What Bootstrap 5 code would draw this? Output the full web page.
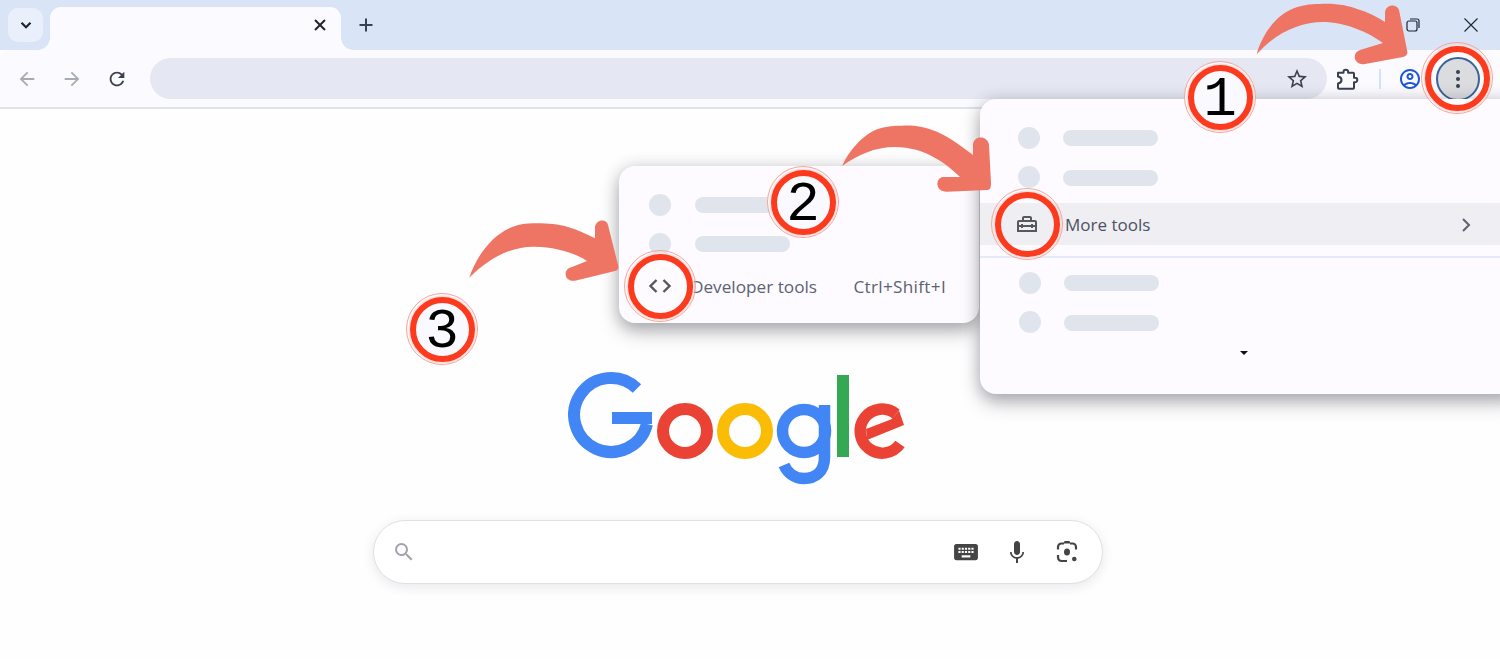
<!DOCTYPE html>
<html lang="en">
<head>
  <meta charset="UTF-8">
  <meta name="viewport" content="width=device-width, initial-scale=1">
  <title>New Tab</title>
  <link href="https://cdn.jsdelivr.net/npm/bootstrap@5.3.0/dist/css/bootstrap.min.css" rel="stylesheet">
  <style>
    html, body { height: 100%; }
    body {
      background-color: #fffeff;
      font-family: "Open Sans", "Noto Sans", sans-serif;
      overflow: hidden;
      position: relative;
    }
    .tab-strip {
      height: 50px;
      background-color: #d9e4f6;
      padding-left: 8px;
    }
    .tab-search {
      width: 35px;
      height: 34px;
      margin-top: 8px;
      background-color: #e9effb;
      border-radius: 10px;
    }
    .active-tab {
      width: 291px;
      height: 43px;
      margin-top: 7px;
      margin-left: 7px;
      padding: 0 14px 7px 0;
      background-color: #fbfaff;
      border-radius: 11px 11px 0 0;
      position: relative;
    }
    .active-tab::before, .active-tab::after {
      content: "";
      position: absolute;
      bottom: 0;
      width: 12px;
      height: 12px;
    }
    .active-tab::before { left: -12px; background: radial-gradient(circle at 0 0, transparent 11.5px, #fbfaff 12px); }
    .active-tab::after { right: -12px; background: radial-gradient(circle at 100% 0, transparent 11.5px, #fbfaff 12px); }
    .new-tab { width: 34px; height: 34px; margin: 8px 0 0 8px; }
    .win-btn { width: 58px; height: 50px; }
    .tool-bar {
      height: 59px;
      background-color: #fbfaff;
      border-bottom: 2px solid #dfe2e9;
      border-radius: 11px 11px 0 0;
      padding: 0 20px 0 7px;
      position: relative;
    }
    .tool-btn { width: 40px; height: 40px; flex: none; }
    .tool-btn + .tool-btn { margin-left: 5px; }
    .omni-box {
      height: 41px;
      margin-left: 13px;
      padding-right: 10px;
      background-color: #e5e8f2;
      border-radius: 21px;
    }
    .tool-sep { width: 2px; height: 20px; margin: 0 9px 0 12px; background-color: #d3e3fd; }
    .menu-btn { width: 44px; height: 44px; margin-left: 6px; flex: none; background-color: #dadce0; border: 2px solid #3a6398; border-radius: 50%; }

    .page-main { padding-right: 25px; padding-top: 262px; }
    .logo-svg { display: block; margin-bottom: 35px; }
    .search-pill {
      width: 730px;
      height: 64px;
      padding: 0 23px 0 18px;
      background-color: #fff;
      border: 1px solid #dfe1e5;
      border-radius: 32px;
      box-shadow: 0 3px 12px rgba(32, 33, 36, .1);
    }
    .search-tool { width: 24px; height: 24px; margin-left: 26px; }
    .key-tool { width: 26px; height: 26px; }

    .float-menu {
      position: absolute;
      background-color: #fdfbff;
      box-shadow: 0 9px 18px rgba(40, 45, 50, .34), 0 0 16px rgba(40, 45, 50, .16);
    }
    .menu-main { left: 980px; top: 99px; width: 540px; height: 295px; border-radius: 16px; z-index: 2; }
    .menu-tools { left: 619px; top: 166px; width: 360px; height: 157px; border-radius: 16px; z-index: 1; }
    .skel-dot, .skel-bar { position: absolute; background-color: #e0e4ec; }
    .skel-dot { width: 22px; height: 22px; border-radius: 50%; }
    .skel-bar { height: 16px; border-radius: 8px; }
    .d1 { left: 38px; top: 28px; } .b1 { left: 83px; top: 31px; width: 95px; }
    .d2 { left: 38px; top: 67px; } .b2 { left: 83px; top: 71px; width: 95px; }
    .d3 { left: 39px; top: 173px; } .b3 { left: 84px; top: 176px; width: 95px; }
    .d4 { left: 39px; top: 212px; } .b4 { left: 84px; top: 216px; width: 95px; }
    .d5 { left: 30px; top: 28px; } .b5 { left: 76px; top: 31px; width: 95px; }
    .d6 { left: 30px; top: 67px; } .b6 { left: 76px; top: 70px; width: 95px; }
    .tools-row {
      position: absolute;
      left: 0;
      right: 0;
      top: 104px;
      height: 42px;
      padding: 1px 26px 0 85px;
      background-color: #efeef2;
      color: #4b5263;
      font-size: 17px;
    }
    .row-chev { margin-left: 310px; }
    .menu-line { position: absolute; left: 0; right: 0; top: 157px; height: 2px; background-color: #e4eafa; }
    .menu-caret {
      position: absolute;
      left: 260px;
      top: 252px;
      border-left: 4px solid transparent;
      border-right: 4px solid transparent;
      border-top: 4px solid #111;
    }
    .dev-row {
      position: absolute;
      left: 72px;
      right: 33px;
      top: 108px;
      color: #5b6270;
      font-size: 17.2px;
    }
    .dev-keys { letter-spacing: .3px; }
    .dev-icon { position: absolute; left: 28px; top: 107px; }

    .step-arrow { position: absolute; z-index: 3; fill: #ee7464; }
    .arrow-1 { left: 1250px; top: 0; }
    .arrow-2 { left: 835px; top: 120px; }
    .arrow-3 { left: 460px; top: 215px; }
    .ring {
      position: absolute;
      z-index: 4;
      width: 72px;
      height: 72px;
      border-radius: 50%;
      border: 1.5px solid #f6a598;
      padding: 2px;
    }
    .ring::before {
      content: "";
      position: absolute;
      inset: 2.5px;
      border-radius: 50%;
      border: 6px solid #fb3a1e;
      box-shadow: 0 0 0 1.5px #fde0dc;
    }
    .ring-num {
      background-color: #f9f9ff;
      font-family: "Liberation Mono", monospace;
      font-size: 56px;
      line-height: 1;
      color: #000;
    }
    .ring-1 { left: 1184px; top: 61px; }
    .ring-2 { left: 767px; top: 166px; }
    .ring-3 { left: 406px; top: 293px; }
    .ring-menu { left: 1421px; top: 42px; }
    .ring-tools { left: 991px; top: 188px; }
    .ring-dev { left: 624px; top: 250px; }
    .ring-num span { position: relative; top: 3px; }
  </style>
</head>
<body>

  <!-- Tabs -->
  <div class="tab-strip d-flex align-items-start">
    <div class="tab-search d-flex align-items-center justify-content-center">
      <svg width="14" height="14" viewBox="0 0 14 14" fill="none" stroke="#1f2430" stroke-width="2.2"><path d="M2.5 4.8 7 9.2l4.5-4.4"/></svg>
    </div>
    <div class="active-tab d-flex align-items-center justify-content-end">
      <svg width="14" height="14" viewBox="0 0 14 14" fill="none" stroke="#1f2430" stroke-width="2"><path d="M2 2l10 10M12 2 2 12"/></svg>
    </div>
    <div class="new-tab d-flex align-items-center justify-content-center ms-2">
      <svg width="14" height="14" viewBox="0 0 14 14" fill="none" stroke="#3a4152" stroke-width="2"><path d="M7 .5v13M.5 7h13"/></svg>
    </div>
    <div class="win-btn d-flex align-items-center justify-content-center ms-auto">
      <svg width="14" height="14" viewBox="0 0 14 14" fill="none" stroke="#1f2430" stroke-width="1.2"><rect x="1" y="3" width="10" height="10" rx="2"/><path d="M4 1h7a2 2 0 0 1 2 2v7"/></svg>
    </div>
    <div class="win-btn d-flex align-items-center justify-content-center">
      <svg width="14" height="14" viewBox="0 0 14 14" fill="none" stroke="#1f2430" stroke-width="1.1"><path d="M.5.5l13 13M13.5.5l-13 13"/></svg>
    </div>
  </div>

  <!-- Toolbar -->
  <div class="tool-bar d-flex align-items-center">
    <div class="tool-btn d-flex align-items-center justify-content-center">
      <svg width="22" height="22" viewBox="0 0 24 24" fill="#a9abb2"><path d="M20 11H7.83l5.59-5.59L12 4l-8 8 8 8 1.41-1.41L7.83 13H20v-2z"/></svg>
    </div>
    <div class="tool-btn d-flex align-items-center justify-content-center">
      <svg width="22" height="22" viewBox="0 0 24 24" fill="#a9abb2"><path d="M12 4l-1.41 1.41L16.17 11H4v2h12.17l-5.58 5.59L12 20l8-8z"/></svg>
    </div>
    <div class="tool-btn d-flex align-items-center justify-content-center">
      <svg width="22" height="22" viewBox="0 0 24 24" fill="#39404f"><path d="M17.65 6.35A7.958 7.958 0 0 0 12 4c-4.42 0-7.99 3.58-7.99 8s3.57 8 7.99 8c3.73 0 6.84-2.55 7.73-6h-2.08A5.99 5.99 0 0 1 12 18c-3.31 0-6-2.69-6-6s2.69-6 6-6c1.66 0 3.14.69 4.22 1.78L13 11h7V4l-2.35 2.35z"/></svg>
    </div>
    <div class="omni-box flex-grow-1 d-flex align-items-center justify-content-end">
      <div class="tool-btn d-flex align-items-center justify-content-center">
        <svg width="24" height="24" viewBox="0 0 24 24" fill="#39404f"><path d="M22 9.24l-7.19-.62L12 2 9.19 8.63 2 9.24l5.46 4.73L5.82 21 12 17.27 18.18 21l-1.63-7.03L22 9.24zM12 15.4l-3.76 2.27 1-4.28-3.32-2.88 4.38-.38L12 6.1l1.71 4.04 4.38.38-3.32 2.88 1 4.28L12 15.4z"/></svg>
      </div>
    </div>
    <div class="tool-btn d-flex align-items-center justify-content-center">
      <svg width="24" height="24" viewBox="0 0 24 24" fill="none" stroke="#39404f" stroke-width="2" stroke-linejoin="round"><path d="M3 5.700H8.500V5a2.300 2.300 0 0 1 4.600 0V5.700H18a1 1 0 0 1 1 1V10.700h1a2.300 2.300 0 0 1 0 4.600H19V20.700a1 1 0 0 1-1 1H4a1 1 0 0 1-1-1V16.500c2.500-.5 3.500-2 3.500-3.500S5.500 10 3 9.500z"/></svg>
    </div>
    <div class="tool-sep"></div>
    <div class="tool-btn d-flex align-items-center justify-content-center">
      <svg width="24" height="24" viewBox="0 0 24 24" fill="#1a56d6"><path d="M12 2C6.48 2 2 6.48 2 12s4.48 10 10 10 10-4.48 10-10S17.52 2 12 2zM7.35 18.5C8.66 17.56 10.26 17 12 17s3.34.56 4.65 1.5C15.34 19.44 13.74 20 12 20s-3.34-.56-4.65-1.5zm10.79-1.38C16.45 15.8 14.32 15 12 15s-4.45.8-6.14 2.12C4.7 15.73 4 13.95 4 12c0-4.42 3.58-8 8-8s8 3.58 8 8c0 1.95-.7 3.73-1.86 5.12zM12 6c-1.93 0-3.5 1.57-3.5 3.5S10.07 13 12 13s3.5-1.57 3.5-3.5S13.93 6 12 6zm0 5c-.83 0-1.5-.67-1.5-1.5S11.17 8 12 8s1.5.67 1.5 1.5S12.83 11 12 11z"/></svg>
    </div>
    <div class="menu-btn d-flex align-items-center justify-content-center">
      <svg width="6" height="20" viewBox="0 0 6 20" fill="#39404f"><circle cx="3" cy="3" r="2"/><circle cx="3" cy="10" r="2"/><circle cx="3" cy="17" r="2"/></svg>
    </div>
  </div>

  <!-- New tab page -->
  <main class="page-main d-flex flex-column align-items-center">
    <svg class="logo-svg" width="340" height="114" viewBox="568 371 340 114" fill="none" role="img" aria-label="Google">
      <path d="M637 388.5A37 37 0 1 0 647 424" stroke="#4285f4" stroke-width="12"/>
      <rect x="612" y="412" width="40" height="12" fill="#4285f4"/>
      <circle cx="685" cy="431" r="22" stroke="#ea4335" stroke-width="12"/>
      <circle cx="745" cy="431" r="22" stroke="#fbbc05" stroke-width="12"/>
      <circle cx="804" cy="431" r="21.5" stroke="#4285f4" stroke-width="11.5"/>
      <path d="M824.5 405V457C824.5 472 815 478.5 804 478.5C794 478.5 787 472 784 465" stroke="#4285f4" stroke-width="11.5"/>
      <rect x="837" y="375" width="12" height="82" fill="#34a853"/>
      <path d="M900 444A22 22 0 1 1 896 414" stroke="#ea4335" stroke-width="11.5"/>
      <polygon points="899,410.5 904,425 867,440 866,429 891.4,419.2" fill="#ea4335"/>
    </svg>
    <div class="search-pill d-flex align-items-center">
      <svg class="me-auto" width="24" height="24" viewBox="0 0 24 24" fill="#a0a3a9"><path d="M15.5 14h-.79l-.28-.27A6.471 6.471 0 0 0 16 9.5 6.5 6.5 0 1 0 9.5 16c1.61 0 3.09-.59 4.23-1.57l.27.28v.79l5 4.99L20.49 19l-4.99-5zm-6 0C7.01 14 5 11.99 5 9.5S7.01 5 9.5 5 14 7.01 14 9.5 11.99 14 9.5 14z"/></svg>
      <svg class="search-tool key-tool" viewBox="0 0 24 24" fill="#444"><path d="M21 4.500H3C1.900 4.500 1 5.400 1 6.500V17.500C1 18.600 1.900 19.500 3 19.500H21C22.100 19.500 23 18.600 23 17.500V6.500C23 5.400 22.100 4.500 21 4.500zM11 8h2v2h-2V8zm0 3h2v2h-2v-2zM8 8h2v2H8V8zm0 3h2v2H8v-2zm-1 2H5v-2h2v2zm0-3H5V8h2v2zm9 7H8v-2h8v2zm0-4h-2v-2h2v2zm0-3h-2V8h2v2zm3 3h-2v-2h2v2zm0-3h-2V8h2v2z"/></svg>
      <svg class="search-tool" viewBox="0 0 24 24" fill="#444"><path d="M12 15c1.66 0 3-1.34 3-3V4c0-1.66-1.340-3-3-3S9 2.340 9 4v8c0 1.66 1.340 3 3 3zm5.300-3c0 3-2.540 5.100-5.300 5.100S6.700 15 6.700 12H5c0 3.410 2.720 6.230 6 6.720V23h2v-4.280c3.280-.490 6-3.310 6-6.720h-1.700z"/></svg>
      <svg class="search-tool" viewBox="0 0 24 24" fill="none" stroke="#444" stroke-width="2.2"><path d="M9 3.500H6.500A3.500 3.500 0 0 0 3 7v2.500M21 9.500V7a3.500 3.500 0 0 0-3.500-3.500H15M3 15v2.500A3.500 3.500 0 0 0 6.500 21H12"/><path d="M8.500 3.500 9.500 1h5l1 2.500z" fill="#444" stroke="none"/><ellipse cx="12" cy="12" rx="3" ry="3.600" fill="#444" stroke="none"/><circle cx="19.300" cy="19" r="2.300" fill="#444" stroke="none"/></svg>
    </div>
  </main>

  <!-- Chrome menu -->
  <div class="float-menu menu-main">
    <div class="skel-dot d1"></div><div class="skel-bar b1"></div>
    <div class="skel-dot d2"></div><div class="skel-bar b2"></div>
    <div class="tools-row d-flex align-items-center">
      <span>More tools</span>
      <svg class="row-chev" width="12" height="16" viewBox="0 0 12 16" fill="none" stroke="#5b6270" stroke-width="2"><path d="M3 2l6 6-6 6"/></svg>
    </div>
    <div class="menu-line"></div>
    <div class="skel-dot d3"></div><div class="skel-bar b3"></div>
    <div class="skel-dot d4"></div><div class="skel-bar b4"></div>
    <div class="menu-caret"></div>
  </div>

  <!-- More tools submenu -->
  <div class="float-menu menu-tools">
    <div class="skel-dot d5"></div><div class="skel-bar b5"></div>
    <div class="skel-dot d6"></div><div class="skel-bar b6"></div>
    <svg class="dev-icon" width="26" height="26" viewBox="0 0 26 26" fill="none" stroke="#55585f" stroke-width="2.400"><path d="M9.500 7 3.500 13l6 6M16.500 7l6 6-6 6"/></svg>
    <div class="dev-row d-flex justify-content-between">
      <span>Developer tools</span><span class="dev-keys">Ctrl+Shift+I</span>
    </div>
  </div>

  <!-- Step annotations -->
  <svg class="step-arrow arrow-1" width="165" height="70" viewBox="0 0 165 70"><path d="M6.700 54.300C12 35 25 17 40 10C50 5 60 4 70 4C85 3 100 6 107 9C118 12 127 17 135 22V13C135 4 147 3 149 10L157 50C158 54 157 56 153 57L115 64C104 66 101 53 110 50L133 43C118 32 95 22 73 22C50 22 25 33 6.700 54.300Z"/></svg>
  <svg class="step-arrow arrow-2" width="165" height="80" viewBox="0 0 165 80"><path d="M7.300 46C13 32 28 14 43 9C52 6 60 5.700 67 5.700C78 5 90 7 97 10C110 14 125 25 138 35V25C138 15 153 15 154 25L156 63C156 68 155 70 152 70L112 71.700C100 72 100 58 108 57L125 57C112 44 90 27 60 27C40 27 22 35 7.300 46Z"/></svg>
  <svg class="step-arrow arrow-3" width="170" height="75" viewBox="0 0 170 75"><path d="M9.300 62.700C15 45 30 20 53 11.700C60 9 66 8.300 73 8.300C85 8 98 9 107 11.700C118 15 127 19 135 23.300V13C135 4 147 3 148 10L158 50C159 54 158 55 155 56L116 65.500C104 68 102 54 112 52L127 46C115 38 95 32 75 31.700C55 31 32 40 9.300 62.700Z"/></svg>

  <div class="ring ring-1 ring-num d-flex align-items-center justify-content-center"><span>1</span></div>
  <div class="ring ring-2 ring-num d-flex align-items-center justify-content-center"><span>2</span></div>
  <div class="ring ring-3 ring-num d-flex align-items-center justify-content-center"><span>3</span></div>
  <div class="ring ring-menu"></div>
  <div class="ring ring-tools d-flex align-items-center justify-content-center">
    <svg width="24" height="24" viewBox="0 0 24 24" fill="#55585f"><path d="M20 8h-3V6c0-1.100-.9-2-2-2H9c-1.100 0-2 .9-2 2v2H4c-1.100 0-2 .9-2 2v10h20V10c0-1.100-.9-2-2-2zM9 6h6v2H9V6zm11 12H4v-3h2v1h2v-1h8v1h2v-1h2v3zm-2-5v-1h-2v1H8v-1H6v1H4v-3h16v3h-2z"/></svg>
  </div>
  <div class="ring ring-dev"></div>

<script src="https://cdn.jsdelivr.net/npm/bootstrap@5.3.0/dist/js/bootstrap.bundle.min.js"></script>
</body>
</html>
